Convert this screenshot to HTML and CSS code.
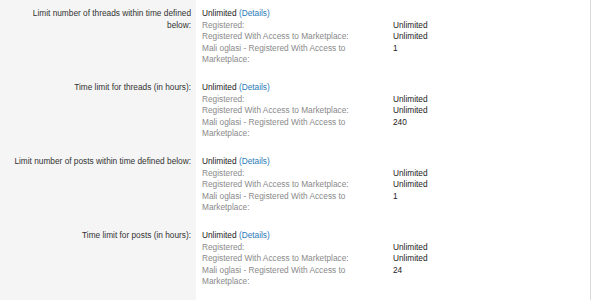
FILE: index.html
```html
<!DOCTYPE html>
<html lang="en">

<head>
    <meta charset="UTF-8" />
    <meta name="viewport" content="width=device-width, initial-scale=1.0" />
    <title>Permissions</title>
    <link rel="stylesheet" href="styles.css">
</head>

<body>
    <div class="form">
        <div class="row">
            <div class="label">Limit number of threads within time defined below:</div>
            <div class="value">
                <div class="main">Unlimited <a href="#">(Details)</a></div>
                <dl class="groups">
                    <dt>Registered:</dt>
                    <dd>Unlimited</dd>
                    <dt>Registered With Access to Marketplace:</dt>
                    <dd>Unlimited</dd>
                    <dt>Mali oglasi - Registered With Access to Marketplace:</dt>
                    <dd>1</dd>
                </dl>
            </div>
        </div>
        <div class="row">
            <div class="label">Time limit for threads (in hours):</div>
            <div class="value">
                <div class="main">Unlimited <a href="#">(Details)</a></div>
                <dl class="groups">
                    <dt>Registered:</dt>
                    <dd>Unlimited</dd>
                    <dt>Registered With Access to Marketplace:</dt>
                    <dd>Unlimited</dd>
                    <dt>Mali oglasi - Registered With Access to Marketplace:</dt>
                    <dd>240</dd>
                </dl>
            </div>
        </div>
        <div class="row">
            <div class="label">Limit number of posts within time defined below:</div>
            <div class="value">
                <div class="main">Unlimited <a href="#">(Details)</a></div>
                <dl class="groups">
                    <dt>Registered:</dt>
                    <dd>Unlimited</dd>
                    <dt>Registered With Access to Marketplace:</dt>
                    <dd>Unlimited</dd>
                    <dt>Mali oglasi - Registered With Access to Marketplace:</dt>
                    <dd>1</dd>
                </dl>
            </div>
        </div>
        <div class="row">
            <div class="label">Time limit for posts (in hours):</div>
            <div class="value">
                <div class="main">Unlimited <a href="#">(Details)</a></div>
                <dl class="groups">
                    <dt>Registered:</dt>
                    <dd>Unlimited</dd>
                    <dt>Registered With Access to Marketplace:</dt>
                    <dd>Unlimited</dd>
                    <dt>Mali oglasi - Registered With Access to Marketplace:</dt>
                    <dd>24</dd>
                </dl>
            </div>
        </div>
        <div class="row">
            <div class="label"></div>
            <div class="value"></div>
        </div>
    </div>
</body>

</html>
```

FILE: styles.css
```css
* {
    box-sizing: border-box;
    margin: 0;
    padding: 0;
}

body {
    font-family: 'Liberation Sans', Arial, sans-serif;
    font-size: 8.3px;
    line-height: 11.6px;
    background: #fff;
    color: #222;
}

.form {
    width: 591px;
    border-right: 1px solid #d8d8d8;
}

.row {
    display: grid;
    grid-template-columns: 196px 1fr;
}

.label {
    background: #f5f5f5;
    color: #333;
    text-align: right;
    padding: 8px 5px 8px 10px;
}

.value {
    padding: 8px 6px 8px 6px;
    min-height: 74px;
}

.main {
    color: #1a1a1a;
}

.main a {
    color: #2b7bb8;
    text-decoration: none;
}

.groups {
    display: grid;
    grid-template-columns: 160px 1fr;
    column-gap: 31px;
}

.groups dt {
    color: #8a8a8a;
}

.groups dd {
    color: #222;
}
```
